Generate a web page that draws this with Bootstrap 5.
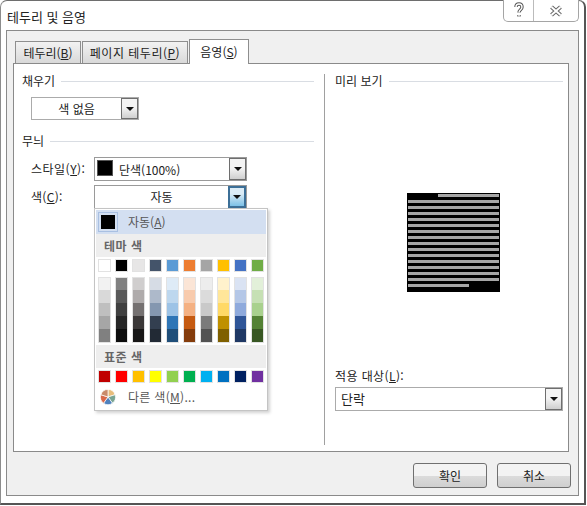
<!DOCTYPE html>
<html lang="ko">
<head>
    <meta charset="UTF-8">
    <meta name="viewport" content="width=device-width, initial-scale=1.0">
    <title>테두리 및 음영</title>
    <link href="https://cdn.jsdelivr.net/npm/bootstrap@5.3.0/dist/css/bootstrap.min.css" rel="stylesheet">
    <style>
        html, body { width: 587px; height: 506px; overflow: hidden; background: #fff; }
        body { font-family: "Noto Sans CJK KR", "Liberation Sans", sans-serif; font-size: 12px; line-height: 16px; color: #222; }
        .dlg-window { position: relative; width: 586px; height: 505px; background: #fff; border: 1px solid #8c8c8c; border-top-color: #6e6e6e; border-right: 2px solid #555; border-bottom: 2px solid #555; border-top-left-radius: 7px; border-top-right-radius: 7px; }
        .dlg-title { height: 29px; padding: 8px 0 0 6px; font-size: 13px; }
        .dlg-controls { position: absolute; top: -1px; right: 5px; width: 76px; height: 22px; background: #fff; border: 1px solid #a5a5a5; border-top: 0; border-radius: 0 0 5px 5px; }
        .dlg-controls > div { width: 29px; }
        .dlg-controls > div + div { width: 45px; border-left: 1px solid #bbb; }
        .dlg-client { margin-left: 5px; width: 573px; height: 466px; background: #f0f0f0; border: 1px solid #8a8a8a; padding: 8px 0 0 6px; }
        .tab-strip { height: 24px; padding-left: 2px; }
        .tab-item { height: 22px; margin-right: 1px; padding-top: 3px; text-align: center; border: 1px solid #8e8e8e; border-bottom: 0; background: linear-gradient(#f2f2f2, #d9d9d9); }
        .tab-one { width: 66px; }
        .tab-two { width: 106px; letter-spacing: .5px; }
        .tab-active { width: 60px; height: 25px; padding-top: 4px; margin-right: 0; margin-bottom: -1px; background: #fff; position: relative; z-index: 1; }
        .tab-panel { width: 556px; height: 389px; background: #fff; border: 1px solid #8a8a8a; }
        .left-pane { width: 311px; padding: 9px 10px 0 8px; }
        .right-pane { width: 244px; margin-top: 10px; height: 371px; border-left: 1px solid #a0a0a0; padding: 0 5px 0 10px; }
        .right-pane .group-head { margin-top: -1px; }
        .group-head { height: 16px; }
        .group-head::after { content: ""; flex: 1; height: 1px; background: #d9dde3; margin-left: 6px; }
        .pattern-head { margin-top: 13px; }
        .fill-row { margin: 8px 0 0 9px; }
        .pick-box { height: 23px; background: #fff; border: 1px solid #ababab; }
        .pick-text { flex: 1; text-align: center; padding-top: 3px; }
        .pick-arrow { width: 17px; border: 1px solid #6e6e6e; background: linear-gradient(#f4f4f4 45%, #cfcfcf); }
        .pick-arrow::after { content: ""; border-left: 4px solid transparent; border-right: 4px solid transparent; border-top: 4px solid #111; }
        .pick-fill { width: 108px; }
        .pick-wide { width: 153px; height: 24px; border-color: #9a9a9a; }
        .pick-open .pick-arrow { width: 18px; border: 2px solid #3c6f97; background: linear-gradient(#dcecf6 30%, #7cc0e6); }
        .pick-full { width: 228px; height: 24px; }
        .pick-full .pick-text { text-align: left; padding-left: 5px; padding-top: 3px; font-size: 13px; }
        .field-row { margin-left: 9px; }
        .field-label { width: 63px; letter-spacing: .3px; }
        .style-label { margin-top: -1px; letter-spacing: .5px; }
        .swatch-solid { width: 16px; height: 16px; background: #000; margin: 2px 0 0 2px; border: 1px solid #555; }
        .style-text { flex: 1; padding: 4px 0 0 6px; }
        .preview-box { width: 93px; height: 99px; margin: 104px 0 0 72px; padding: 1px 1px 0; background: #000; }
        .preview-line { height: 3px; margin-bottom: 3px; background: #a6a6a6; }
        .line-first { margin-left: 30px; }
        .line-last { margin-right: 30px; }
        .apply-label { margin: 76px 0 3px 0; letter-spacing: .4px; }
        .color-menu { position: absolute; left: 94px; top: 208px; width: 174px; height: 203px; background: #fff; border: 1px solid #c4c4c4; padding: 1px; box-shadow: 2px 2px 3px rgba(0,0,0,.18); z-index: 5; }
        .menu-auto { height: 24px; background: #d3dff1; padding-left: 2px; color: #555; }
        .auto-chip { width: 20px; height: 20px; margin-right: 10px; border: 1px solid #a9c0e2; padding: 2px; }
        .auto-chip span { display: block; width: 100%; height: 100%; background: #000; }
        .menu-head { height: 23px; background: #eee; padding-left: 8px; font-weight: 700; color: #666; letter-spacing: .5px; }
        .menu-grid { display: grid; grid-template-columns: repeat(10, 13px); column-gap: 4px; padding-left: 2px; }
        .theme-grid { margin: 2px 0 5px; }
        .shade-grid { margin-bottom: 2px; }
        .std-grid { margin: 2px 0 2px; }
        .color-cell { height: 13px; border: 1px solid #e2e2e2; }
        .shade-col { border: 1px solid #e2e2e2; }
        .shade-cell { height: 13px; }
        .shade-cell:first-child { height: 12px; }
        .menu-more { height: 24px; padding-left: 4px; color: #555; letter-spacing: .3px; }
        .more-icon { margin-right: 12px; }
        .dlg-foot { margin-top: 11px; width: 558px; gap: 10px; }
        .dlg-btn { width: 74px; height: 25px; padding: 0; font-size: 12px; line-height: 1; color: #222; border: 1px solid #707070; border-radius: 3px; background: linear-gradient(#f3f3f3 50%, #dcdcdc 50%, #cfcfcf); }
        u { text-underline-offset: 1px; }
    </style>
</head>
<body>
    <div class="dlg-window">
        <div class="dlg-title">테두리 및 음영</div>
        <div class="dlg-controls d-flex">
            <div class="d-flex align-items-center justify-content-center">
                <svg width="12" height="17" viewBox="0 0 12 17"><path d="M3 5 C3 1 9 1 9 5 C9 8 6 7.5 6 10.5 M6 13 V14.5" fill="none" stroke="#555" stroke-width="3.4"/><path d="M3 5 C3 1 9 1 9 5 C9 8 6 7.5 6 10.5 M6 13 V14.5" fill="none" stroke="#fff" stroke-width="1.4"/></svg>
            </div>
            <div class="d-flex align-items-center justify-content-center">
                <svg width="14" height="12" viewBox="0 0 14 12"><path d="M2.5 2 L11.5 10 M11.5 2 L2.5 10" fill="none" stroke="#666" stroke-width="4"/><path d="M2.5 2 L11.5 10 M11.5 2 L2.5 10" fill="none" stroke="#fff" stroke-width="2"/></svg>
            </div>
        </div>
        <div class="dlg-client">
            <div class="tab-strip d-flex align-items-end">
                <div class="tab-item tab-one">테두리(<u>B</u>)</div>
                <div class="tab-item tab-two">페이지 테두리(<u>P</u>)</div>
                <div class="tab-item tab-active">음영(<u>S</u>)</div>
            </div>
            <div class="tab-panel d-flex">
                <div class="left-pane">
                    <div class="group-head d-flex align-items-center">채우기</div>
                    <div class="fill-row">
                        <div class="pick-box pick-fill d-flex">
                            <div class="pick-text">색 없음</div>
                            <div class="pick-arrow d-flex align-items-center justify-content-center"></div>
                        </div>
                    </div>
                    <div class="group-head pattern-head d-flex align-items-center">무늬</div>
                    <div class="field-row d-flex align-items-center mt-2">
                        <div class="field-label style-label">스타일(<u>Y</u>):</div>
                        <div class="pick-box pick-wide d-flex">
                            <div class="swatch-solid"></div>
                            <div class="style-text">단색(100%)</div>
                            <div class="pick-arrow d-flex align-items-center justify-content-center"></div>
                        </div>
                    </div>
                    <div class="field-row d-flex align-items-center mt-1">
                        <div class="field-label">색(<u>C</u>):</div>
                        <div class="pick-box pick-wide pick-open d-flex">
                            <div class="pick-text">자동</div>
                            <div class="pick-arrow d-flex align-items-center justify-content-center"></div>
                        </div>
                    </div>
                </div>
                <div class="right-pane">
                    <div class="group-head d-flex align-items-center">미리 보기</div>
                    <div class="preview-box" id="preview-box"></div>
                    <div class="apply-label">적용 대상(<u>L</u>):</div>
                    <div class="pick-box pick-full d-flex">
                        <div class="pick-text">단락</div>
                        <div class="pick-arrow d-flex align-items-center justify-content-center"></div>
                    </div>
                </div>
            </div>
            <div class="dlg-foot d-flex justify-content-end">
                <button type="button" class="btn dlg-btn">확인</button>
                <button type="button" class="btn dlg-btn">취소</button>
            </div>
        </div>
    </div>

    <!-- Colour drop-down lies over the dialog -->
    <div class="color-menu">
        <div class="menu-auto d-flex align-items-center">
            <div class="auto-chip"><span></span></div>
            <div>자동(<u>A</u>)</div>
        </div>
        <div class="menu-head d-flex align-items-center">테마 색</div>
        <div class="menu-grid theme-grid" id="theme-grid"></div>
        <div class="menu-grid shade-grid" id="shade-grid"></div>
        <div class="menu-head d-flex align-items-center">표준 색</div>
        <div class="menu-grid std-grid" id="std-grid"></div>
        <div class="menu-more d-flex align-items-center">
            <svg width="16" height="16" viewBox="0 0 18 18" class="more-icon">
                <g stroke="#fff" stroke-width=".8">
                    <path d="M9 9 L9 .5 A8.5 8.5 0 0 1 17 6.4 Z" fill="#e8bd7c"/>
                    <path d="M9 9 L17 6.4 A8.5 8.5 0 0 1 14 15.9 Z" fill="#7aa593"/>
                    <path d="M9 9 L14 15.9 A8.5 8.5 0 0 1 4 15.9 Z" fill="#4f81bd"/>
                    <path d="M9 9 L4 15.9 A8.5 8.5 0 0 1 1 6.4 Z" fill="#d9694a"/>
                    <path d="M9 9 L1 6.4 A8.5 8.5 0 0 1 9 .5 Z" fill="#c98a6a"/>
                </g>
            </svg>
            <div>다른 색(<u>M</u>)...</div>
        </div>
    </div>

    <script src="https://cdn.jsdelivr.net/npm/bootstrap@5.3.0/dist/js/bootstrap.bundle.min.js"></script>
    <script>
        const themeColors = ['#FFFFFF', '#000000', '#E7E6E6', '#44546A', '#5B9BD5', '#ED7D31', '#A5A5A5', '#FFC000', '#4472C4', '#70AD47'];
        const shadeColors = [
            ['#F2F2F2', '#D9D9D9', '#BFBFBF', '#A6A6A6', '#808080'],
            ['#808080', '#595959', '#404040', '#262626', '#0D0D0D'],
            ['#D0CECE', '#AFABAB', '#757171', '#3B3838', '#181717'],
            ['#D6DCE5', '#ADB9CA', '#8497B0', '#333F50', '#222A35'],
            ['#DEEBF7', '#BDD7EE', '#9DC3E6', '#2E75B6', '#1F4E79'],
            ['#FBE5D6', '#F8CBAD', '#F4B183', '#C55A11', '#843C0C'],
            ['#EDEDED', '#DBDBDB', '#C9C9C9', '#7B7B7B', '#525252'],
            ['#FFF2CC', '#FFE699', '#FFD966', '#BF9000', '#7F6000'],
            ['#DAE3F3', '#B4C7E7', '#8FAADC', '#2F5597', '#1F3864'],
            ['#E2F0D9', '#C6E0B4', '#A9D18E', '#548235', '#385723']
        ];
        const standardColors = ['#C00000', '#FF0000', '#FFC000', '#FFFF00', '#92D050', '#00B050', '#00B0F0', '#0070C0', '#002060', '#7030A0'];

        // Swatch rows
        function fillRow(id, colors) {
            const grid = document.getElementById(id);
            colors.forEach(color => {
                const cell = document.createElement('div');
                cell.className = 'color-cell';
                cell.style.background = color;
                grid.appendChild(cell);
            });
        }
        fillRow('theme-grid', themeColors);
        fillRow('std-grid', standardColors);

        // Shade columns
        const shadeGrid = document.getElementById('shade-grid');
        shadeColors.forEach(col => {
            const wrap = document.createElement('div');
            wrap.className = 'shade-col';
            col.forEach(color => {
                const cell = document.createElement('div');
                cell.className = 'shade-cell';
                cell.style.background = color;
                wrap.appendChild(cell);
            });
            shadeGrid.appendChild(wrap);
        });

        // Preview lines
        const previewBox = document.getElementById('preview-box');
        for (let i = 0; i < 16; i++) {
            const line = document.createElement('div');
            line.className = 'preview-line' + (i === 0 ? ' line-first' : '') + (i === 15 ? ' line-last' : '');
            previewBox.appendChild(line);
        }
    </script>
</body>
</html>
